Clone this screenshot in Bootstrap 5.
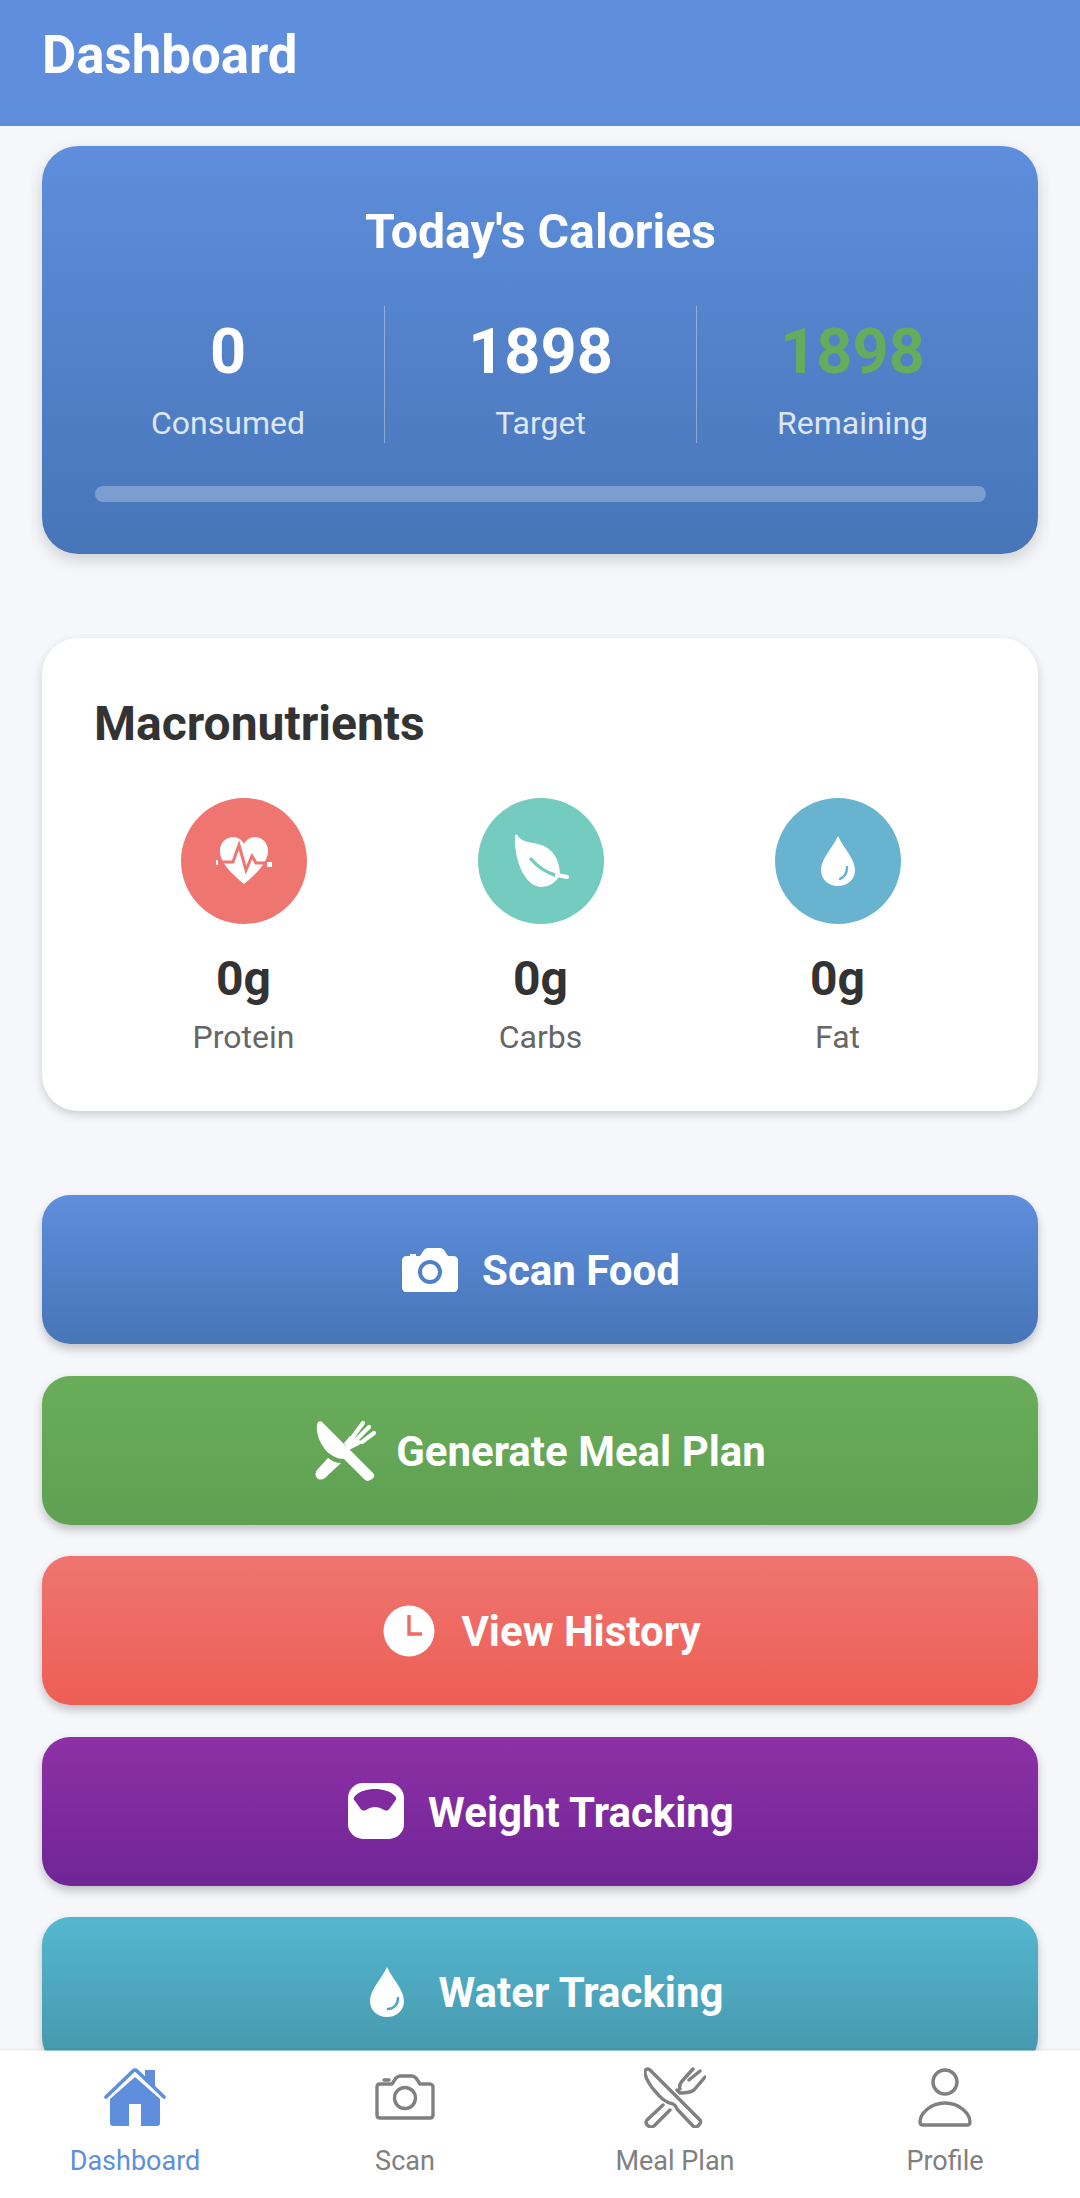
<!DOCTYPE html>
<html lang="en">
<head>
<meta charset="utf-8">
<title>Dashboard</title>
<link href="https://cdn.jsdelivr.net/npm/bootstrap@5.3.0/dist/css/bootstrap.min.css" rel="stylesheet">
<style>
html,body{height:2198px;overflow:hidden}
body{font-family:Roboto,"Liberation Sans",sans-serif;background:#f5f7fb;color:#333}
.app-shell{height:2198px}
.app-head{height:126px;background:#5e8edc;padding:25px 42px 0;color:#fff}
.app-head h1{font-size:52.8px;font-weight:700;line-height:60px;margin:0}
.app-main{padding:20px 42px 0;min-height:0;margin-bottom:-1px}
.cal-box{height:407.5px;border-radius:36px;background:linear-gradient(180deg,#5e8edc,#4775b8);box-shadow:0 6px 16px rgba(0,0,0,.16);color:#fff;padding:58px 52px 0 53px;margin-bottom:84.5px}
.cal-box h2{font-size:48.2px;font-weight:700;line-height:56px;text-align:center;margin:0 0 46px}
.stat-row{margin:0 -22px 0 -23px}
.stat-cell{width:312px;height:137px;text-align:center;padding-top:10px}
.stat-cell+.stat-cell{border-left:1px solid rgba(255,255,255,.35)}
.stat-num{font-size:63px;font-weight:700;line-height:72px}
.stat-cap{font-size:32px;line-height:40px;margin-top:15px;color:rgba(255,255,255,.82)}
.stat-good{color:#66ac5c}
.cal-track{height:16px;border-radius:8px;background:rgba(255,255,255,.28);margin-top:43px}
.macro-box{height:473px;border-radius:36px;background:#fff;box-shadow:0 4px 10px rgba(0,0,0,.16);padding:59px 52px 0;margin-bottom:84px}
.macro-box h2{font-size:48px;font-weight:700;line-height:54px;margin:0 0 46px;color:#333}
.macro-line{margin-left:1px}
.macro-cell{width:297px;text-align:center}
.macro-dot{width:126px;height:126px;border-radius:50%;margin-top:1px}
.macro-num{font-size:48px;font-weight:700;line-height:54px;margin-top:28px}
.macro-cap{font-size:32px;line-height:40px;margin-top:11px;color:#666}
.act-btn{height:149px;border-radius:28px;border:0;width:100%;color:#fff;font-size:42px;font-weight:700;box-shadow:0 5px 10px rgba(0,0,0,.22);margin-bottom:31.6px;padding:0 0 0 2px}
.act-btn span{position:relative;top:1px}
.act-ico{width:56px;overflow:visible;flex:none}
.act-blue{background:linear-gradient(180deg,#5e8edc,#4775b8)}
.act-green{background:linear-gradient(180deg,#69ad5a,#5fa052)}
.act-red{background:linear-gradient(180deg,#ef7570,#ed5e55)}
.act-purple{background:linear-gradient(180deg,#8e30a6,#6f2596)}
.act-teal{background:linear-gradient(180deg,#54b7d0,#4596ab)}
.tab-bar{height:148px;background:#fff;background-clip:padding-box;border-top:1px solid rgba(255,255,255,.45);box-shadow:0 -1px 2px rgba(0,0,0,.05);position:relative}
.tab-item{width:270px;color:#808080;font-size:27px;line-height:30px;padding-top:15px;position:relative}
.tab-item svg{display:block;height:62px;margin-bottom:18px;fill:none;stroke:#808080;stroke-width:3.4;stroke-linejoin:round;stroke-linecap:round}
.tab-on{color:#5e8edc}
</style>
</head>
<body>
<div class="app-shell d-flex flex-column">
  <header class="app-head flex-shrink-0"><h1>Dashboard</h1></header>
  <main class="app-main flex-grow-1 overflow-hidden">
    <section class="cal-box">
      <h2>Today's Calories</h2>
      <div class="stat-row d-flex">
        <div class="stat-cell"><div class="stat-num">0</div><div class="stat-cap">Consumed</div></div>
        <div class="stat-cell"><div class="stat-num">1898</div><div class="stat-cap">Target</div></div>
        <div class="stat-cell"><div class="stat-num stat-good">1898</div><div class="stat-cap">Remaining</div></div>
      </div>
      <div class="cal-track"></div>
    </section>
    <section class="macro-box">
      <h2>Macronutrients</h2>
      <div class="macro-line d-flex">
        <div class="macro-cell d-flex flex-column align-items-center">
          <div class="macro-dot d-flex align-items-center justify-content-center" style="background:#ef7571">
            <svg width="56" height="50" viewBox="0 0 56 50"><path d="M28 48C20 41 6 30 4 17 3 7 10 1 17 1c5 0 9 3 11 7 2-4 6-7 11-7 7 0 14 6 13 16-2 13-16 24-24 31z" fill="#fff"/><path d="M2 26h15l6-17 7 25 6-14 4 7h13" fill="none" stroke="#ef7571" stroke-width="3"/><path d="M0 24h2v5H0zM51 26h5v5h-5z" fill="#fff"/></svg>
          </div>
          <div class="macro-num">0g</div><div class="macro-cap">Protein</div>
        </div>
        <div class="macro-cell d-flex flex-column align-items-center">
          <div class="macro-dot d-flex align-items-center justify-content-center" style="background:#74cbc0">
            <svg width="56" height="54" viewBox="0 0 56 54"><path d="M4 1C8 6 12 8 20 9c16 2 26 12 27 30-3 10-11 14-20 14C11 51 1 25 2 3c0-2 1-3 2-2z" fill="#fff"/><path d="M18 25c6 7 14 13 24 16" fill="none" stroke="#74cbc0" stroke-width="3.4" stroke-linecap="round"/><path d="M44 41l10 2" stroke="#fff" stroke-width="4" stroke-linecap="round"/></svg>
          </div>
          <div class="macro-num">0g</div><div class="macro-cap">Carbs</div>
        </div>
        <div class="macro-cell d-flex flex-column align-items-center">
          <div class="macro-dot d-flex align-items-center justify-content-center" style="background:#68b4d0">
            <svg width="36" height="52" viewBox="0 0 36 52"><path d="M18 1C13 12 1 24 1 35c0 10 8 16 17 16s17-6 17-16C35 24 23 12 18 1z" fill="#fff"/><path d="M27 32c0 6-2 10-7 12" fill="none" stroke="#68b4d0" stroke-width="2.5" stroke-linecap="round"/></svg>
          </div>
          <div class="macro-num">0g</div><div class="macro-cap">Fat</div>
        </div>
      </div>
    </section>
    <button type="button" class="act-btn act-blue d-flex align-items-center justify-content-center gap-4">
      <svg class="act-ico" height="44" viewBox="0 0 56 44"><path d="M5 8h3V6h6v2h4l4-6c1-1 2-2 4-2h12c2 0 3 1 4 2l4 6h5c3 0 5 2 5 4v28c0 2-2 4-4 4H4c-2 0-4-2-4-4V12c0-2 2-4 5-4z" fill="#fff"/><circle cx="28" cy="24" r="10" fill="none" stroke="#4f80c9" stroke-width="4"/></svg>
      <span>Scan Food</span>
    </button>
    <button type="button" class="act-btn act-green d-flex align-items-center justify-content-center gap-4">
      <svg class="act-ico" height="60" viewBox="0 0 56 60"><path d="M6 2L56 52c3 3 3 5 0 7s-5 3-8 0L31 42l-3-3C20 39 12 34 8 28 3 21 0 12 1 5c0-3 3-5 5-3z" fill="#fff"/><path d="M12 38c4 3 8 5 13 5L9 58c-3 2-6 2-8 0s-2-5 0-8z" fill="#fff"/><path d="M36 18L47 3M41 19L53 7M46 22L58 13" fill="none" stroke="#fff" stroke-width="4.2" stroke-linecap="round"/><path d="M28 23l6-7 13 6-4 3-10 5z" fill="#fff"/></svg>
      <span>Generate Meal Plan</span>
    </button>
    <button type="button" class="act-btn act-red d-flex align-items-center justify-content-center gap-4">
      <svg class="act-ico" height="52" viewBox="0 0 56 52"><circle cx="28" cy="26" r="25.5" fill="#fff"/><path d="M28 10v19h13" fill="none" stroke="#ee6a63" stroke-width="3.4"/></svg>
      <span>View History</span>
    </button>
    <button type="button" class="act-btn act-purple d-flex align-items-center justify-content-center gap-4">
      <svg class="act-ico" height="56" viewBox="0 0 56 56"><rect width="56" height="56" rx="15" fill="#fff"/><path d="M7 13C12 8 19 6 27 6s15 2 20 7c2 2 1 4 0 5l-5 7c-2 3-4 3-6 2-3-2-6-3-9-3s-6 1-9 3c-2 1-4 1-6-2l-5-7c-1-1-2-3 0-5z" fill="#7f2a9e"/></svg>
      <span>Weight Tracking</span>
    </button>
    <button type="button" class="act-btn act-teal d-flex align-items-center justify-content-center gap-4">
      <svg class="act-ico" height="52" viewBox="-10 0 56 52"><path d="M18 1C13 12 1 24 1 35c0 10 8 16 17 16s17-6 17-16C35 24 23 12 18 1z" fill="#fff"/><path d="M29 32c0 6-4 11-10 11" fill="none" stroke="#4ca5bb" stroke-width="2.5" stroke-linecap="round"/></svg>
      <span>Water Tracking</span>
    </button>
  </main>
  <nav class="tab-bar d-flex flex-shrink-0">
    <div class="tab-item tab-on d-flex flex-column align-items-center">
      <svg width="62" viewBox="0 0 62 62"><path d="M2 31L29 5a3 3 0 0 1 4 0L60 31" stroke="#5e8edc" stroke-width="3.6"/><path d="M41 4h10v17L41 12z" fill="#5e8edc" stroke="none"/><path d="M31 11l25 22v24a3 3 0 0 1-3 3H37V38H25v22H9a3 3 0 0 1-3-3V33z" fill="#5e8edc" stroke="none"/></svg>
      Dashboard
    </div>
    <div class="tab-item d-flex flex-column align-items-center">
      <svg width="62" viewBox="0 0 62 62"><path d="M6 18H18l4-6c1-1 2-2 4-2H38c2 0 3 1 4 2l4 6H56c2 0 3 2 3 3V49c0 2-1 3-3 3H6c-2 0-3-1-3-3V21c0-2 1-3 3-3z"/><path d="M10 14h5"/><circle cx="31" cy="32" r="10.5"/></svg>
      Scan
    </div>
    <div class="tab-item d-flex flex-column align-items-center">
      <svg width="62" viewBox="0 0 62 62"><path d="M6 4L56 54c2 3-3 9-7 6L33 43c-1-2-1-4-4-5-6-1-12-5-18-13C6 20 1 11 1 6c0-3 3-4 5-2z"/><path d="M19 39L3 54c-3 4 3 9 7 6L26 44"/><path d="M36 23c-1-3 0-6 3-9L49 3M45 14L56 5M61 11L50 24c-3 2-8 3-13 3M33 24l3 3"/></svg>
      Meal Plan
    </div>
    <div class="tab-item d-flex flex-column align-items-center">
      <svg width="62" viewBox="0 0 62 62"><circle cx="31" cy="16" r="12"/><path d="M31 37C16 37 6 48 6 56c0 2 1 3 3 3H53c2 0 3-1 3-3C56 48 46 37 31 37z"/></svg>
      Profile
    </div>
  </nav>
</div>
<script src="https://cdn.jsdelivr.net/npm/bootstrap@5.3.0/dist/js/bootstrap.bundle.min.js"></script>
</body>
</html>
